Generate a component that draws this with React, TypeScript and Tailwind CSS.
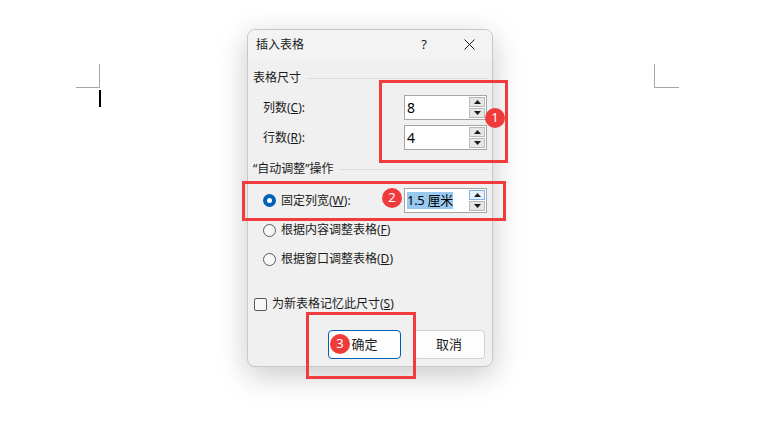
import type { ReactNode } from "react";

const FONT = { fontFamily: '"Noto Sans", "Noto Sans CJK SC", sans-serif' };

const Arrow = ({ up }: { up?: boolean }) => (
  <svg width="7" height="4" viewBox="0 0 7 4">
    <path d={up ? "M0 4 L3.5 0 L7 4 Z" : "M0 0 L3.5 4 L7 0 Z"} fill="#1a1a1a" />
  </svg>
);

const SpinBox = ({
  children,
  hot,
}: {
  children: ReactNode;
  hot?: boolean;
}) => (
  <div className="flex h-[25px] w-[83px] items-stretch border border-[#a5a5a5] bg-white">
    <div className="flex flex-1 items-center pl-[2px] text-[14px] text-black">
      {children}
    </div>
    <div className="flex w-[17px] flex-col gap-[1px] py-[1px] pr-[1px]">
      <div
        className={
          hot
            ? "flex flex-1 items-center justify-center border border-[#7eb4ea] bg-[#e5f1fb]"
            : "flex flex-1 items-center justify-center border border-[#b9b9b9] bg-[#e6e6e6]"
        }
      >
        <Arrow up />
      </div>
      <div className="flex flex-1 items-center justify-center border border-[#b9b9b9] bg-[#e6e6e6]">
        <Arrow />
      </div>
    </div>
  </div>
);

const Header = ({ label }: { label: string }) => (
  <div className="flex h-[16px] items-center gap-[6px] pl-[5px] pr-[4px]">
    <span>{label}</span>
    <div className="h-[1px] flex-1 bg-[#dadada]" />
  </div>
);

const Radio = ({ on }: { on?: boolean }) =>
  on ? (
    <div className="flex h-[13px] w-[13px] items-center justify-center rounded-full bg-[#005fb8]">
      <div className="h-[5px] w-[5px] rounded-full bg-white" />
    </div>
  ) : (
    <div className="h-[13px] w-[13px] rounded-full border border-[#5a5a5a] bg-[#f7f7f7]" />
  );

const Badge = ({ n, className }: { n: number; className: string }) => (
  <div
    className={`absolute flex h-[20px] w-[20px] items-center justify-center rounded-full bg-[#ef3b3b] text-[13px] text-white ${className}`}
  >
    {n}
  </div>
);

export default function App() {
  return (
    <div
      className="relative h-[425px] w-[765px] overflow-hidden bg-white text-[12px] text-[#1a1a1a]"
      style={FONT}
    >
      {/* page corner marks and caret */}
      <div className="absolute left-[76px] top-[64px] h-[24px] w-[24px] border-b border-r border-[#a6a6a6]" />
      <div className="absolute left-[654px] top-[64px] h-[24px] w-[25px] border-b border-l border-[#a6a6a6]" />
      <div className="absolute left-[99px] top-[90px] h-[17px] w-[2px] bg-black" />

      <div className="flex pl-[247px] pt-[29px]">
        <div className="flex h-[338px] w-[246px] flex-col overflow-hidden rounded-[8px] border border-[#c8c8c8] bg-[#f0f0f0] shadow-[0_8px_30px_rgba(0,0,0,0.22)]">
          {/* title bar */}
          <div className="flex h-[29px] items-center bg-[#f3f3f3] pl-[8px]">
            <span className="text-[12px]">插入表格</span>
            <span className="ml-auto mr-[37px] text-[13px]">?</span>
            <svg width="11" height="11" viewBox="0 0 11 11" className="mr-[17px]">
              <path d="M0.5 0.5 L10.5 10.5 M10.5 0.5 L0.5 10.5" stroke="#1a1a1a" strokeWidth="1" />
            </svg>
          </div>

          {/* body */}
          <div className="flex flex-1 flex-col pt-[11px]">
            <Header label="表格尺寸" />
            <div className="mt-[9px] flex h-[25px] items-center pl-[15px] pr-[5px]">
              <span>
                列数(<span className="underline">C</span>):
              </span>
              <div className="ml-auto">
                <SpinBox>8</SpinBox>
              </div>
            </div>
            <div className="mt-[5px] flex h-[25px] items-center pl-[15px] pr-[5px]">
              <span>
                行数(<span className="underline">R</span>):
              </span>
              <div className="ml-auto">
                <SpinBox>4</SpinBox>
              </div>
            </div>

            <div className="mt-[11px]">
              <Header label="“自动调整”操作" />
            </div>

            <div className="mt-[11px] flex h-[25px] items-center gap-[5px] pl-[15px] pr-[5px]">
              <Radio on />
              <span>
                固定列宽(<span className="underline">W</span>):
              </span>
              <div className="ml-auto">
                <SpinBox hot>
                  <span className="bg-[#99c9ef] text-[13px] leading-[17px] tracking-[-0.3px]">
                    1.5 厘米
                  </span>
                </SpinBox>
              </div>
            </div>
            <div className="mt-[9px] flex h-[16px] items-center gap-[5px] pl-[15px]">
              <Radio />
              <span>
                根据内容调整表格(<span className="underline">F</span>)
              </span>
            </div>
            <div className="mt-[13px] flex h-[16px] items-center gap-[5px] pl-[15px]">
              <Radio />
              <span>
                根据窗口调整表格(<span className="underline">D</span>)
              </span>
            </div>

            <div className="mt-[29px] flex h-[16px] items-center gap-[5px] pl-[6px]">
              <div className="h-[13px] w-[13px] rounded-[2px] border border-[#5a5a5a] bg-[#f7f7f7]" />
              <span>
                为新表格记忆此尺寸(<span className="underline">S</span>)
              </span>
            </div>

            <div className="mt-[18px] flex gap-[12px] pl-[80px]">
              <div className="flex h-[29px] w-[73px] items-center justify-center rounded-[4px] border border-[#005fb8] bg-[#fdfdfd] text-[13px]">
                确定
              </div>
              <div className="flex h-[29px] w-[72px] items-center justify-center rounded-[4px] border border-[#d0d0d0] bg-[#fdfdfd] text-[13px]">
                取消
              </div>
            </div>
          </div>
        </div>
      </div>

      {/* annotations */}
      <div className="absolute left-[379px] top-[80px] h-[83px] w-[129px] border-[3px] border-[#f03c3c]" />
      <div className="absolute left-[242px] top-[181px] h-[40px] w-[264px] border-[3px] border-[#f03c3c]" />
      <div className="absolute left-[306px] top-[312px] h-[67px] w-[110px] border-[3px] border-[#f03c3c]" />
      <Badge n={1} className="left-[485px] top-[108px]" />
      <Badge n={2} className="left-[382px] top-[188px]" />
      <Badge n={3} className="left-[330px] top-[334px]" />
    </div>
  );
}
